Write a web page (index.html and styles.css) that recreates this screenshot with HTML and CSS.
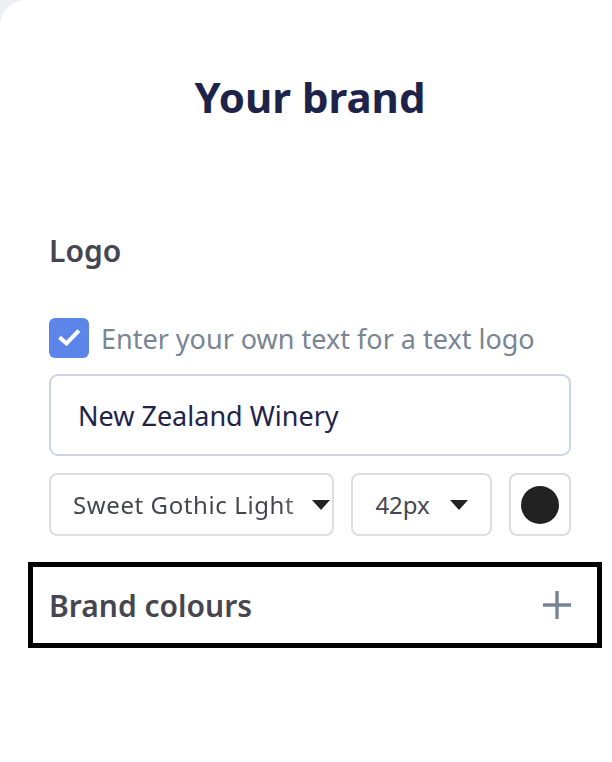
FILE: index.html
```
<!DOCTYPE html>
<html lang="en">
<head>
    <meta charset="UTF-8">
    <meta name="viewport" content="width=device-width, initial-scale=1.0">
    <title>Your brand</title>
    <link rel="stylesheet" href="styles.css">
</head>
<body>

<div class="panel">
    <h1>Your brand</h1>

    <h3 class="section-title">Logo</h3>

    <label class="check-row">
        <span class="checkbox">
            <svg width="24" height="24" viewBox="0 0 24 24"><path d="M4 12.5l5.5 5L20.5 6" fill="none" stroke="#fff" stroke-width="4" stroke-linecap="square"/></svg>
        </span>
        <span class="check-label">Enter your own text for a text logo</span>
    </label>

    <div class="text-input">New Zealand Winery</div>

    <div class="font-row">
        <div class="select font-select">
            <span class="select-value fade">Sweet Gothic Light</span>
            <span class="caret"></span>
        </div>
        <div class="select size-select">
            <span class="select-value">42px</span>
            <span class="caret"></span>
        </div>
        <div class="swatch"><span class="swatch-dot"></span></div>
    </div>

    <div class="brand-colours">
        <span>Brand colours</span>
        <svg width="30" height="30" viewBox="0 0 30 30"><path d="M15 1v28M1 15h28" stroke="#7a8594" stroke-width="3.4"/></svg>
    </div>
</div>

</body>
</html>
```

FILE: styles.css
```
body {
    margin: 0;
    background-color: #eceff3;
    font-family: 'Noto Sans', sans-serif;
}
.panel {
    background: #fff;
    border-top-left-radius: 26px;
    min-height: 762px;
    padding: 71px 41px 0 49px;
    box-sizing: border-box;
}
h1 {
    margin: 0;
    text-align: center;
    font-size: 42px;
    font-weight: 700;
    color: #1e2449;
    line-height: 52px;
}
.section-title {
    margin: 108px 0 0;
    font-size: 30px;
    font-weight: 600;
    color: #45464f;
    line-height: 40px;
}
.check-row {
    display: flex;
    align-items: center;
    gap: 12px;
    margin-top: 47px;
}
.checkbox {
    width: 40px;
    height: 40px;
    border-radius: 6px;
    background: #5c85ea;
    display: flex;
    align-items: center;
    justify-content: center;
    flex-shrink: 0;
}
.check-label {
    font-size: 27px;
    color: #7a8594;
    white-space: nowrap;
}
.text-input {
    margin-top: 16px;
    height: 82px;
    border: 2px solid #cad6e5;
    border-radius: 9px;
    box-sizing: border-box;
    display: flex;
    align-items: center;
    padding-left: 27px;
    font-size: 27px;
    color: #1e2449;
}
.font-row {
    display: flex;
    gap: 17px;
    margin-top: 17px;
}
.select {
    height: 63px;
    border: 2px solid #dedede;
    border-radius: 8px;
    box-sizing: border-box;
    display: flex;
    align-items: center;
    padding-left: 22px;
    font-size: 24px;
    color: #45464f;
}
.font-select {
    width: 286px;
}
.size-select {
    width: 141px;
    justify-content: space-between;
    padding-right: 22px;
}
.select-value {
    white-space: nowrap;
    overflow: hidden;
}
.fade {
    width: 239px;
    letter-spacing: 0.6px;
    -webkit-mask-image: linear-gradient(to right, #000 88%, rgba(0, 0, 0, 0.2) 100%);
    mask-image: linear-gradient(to right, #000 88%, rgba(0, 0, 0, 0.2) 100%);
}
.caret {
    width: 0;
    height: 0;
    border-left: 9px solid transparent;
    border-right: 9px solid transparent;
    border-top: 10px solid #222;
}
.swatch {
    width: 62px;
    height: 63px;
    border: 2px solid #dedede;
    border-radius: 8px;
    box-sizing: border-box;
    display: flex;
    align-items: center;
    justify-content: center;
}
.swatch-dot {
    width: 38px;
    height: 38px;
    border-radius: 50%;
    background: #222;
}
.brand-colours {
    margin: 26px -31px 0 -21px;
    height: 86px;
    border: 5px solid #000;
    box-sizing: border-box;
    display: flex;
    align-items: center;
    justify-content: space-between;
    padding: 0 25px 0 16px;
    font-size: 30px;
    font-weight: 600;
    color: #45464f;
}
```
